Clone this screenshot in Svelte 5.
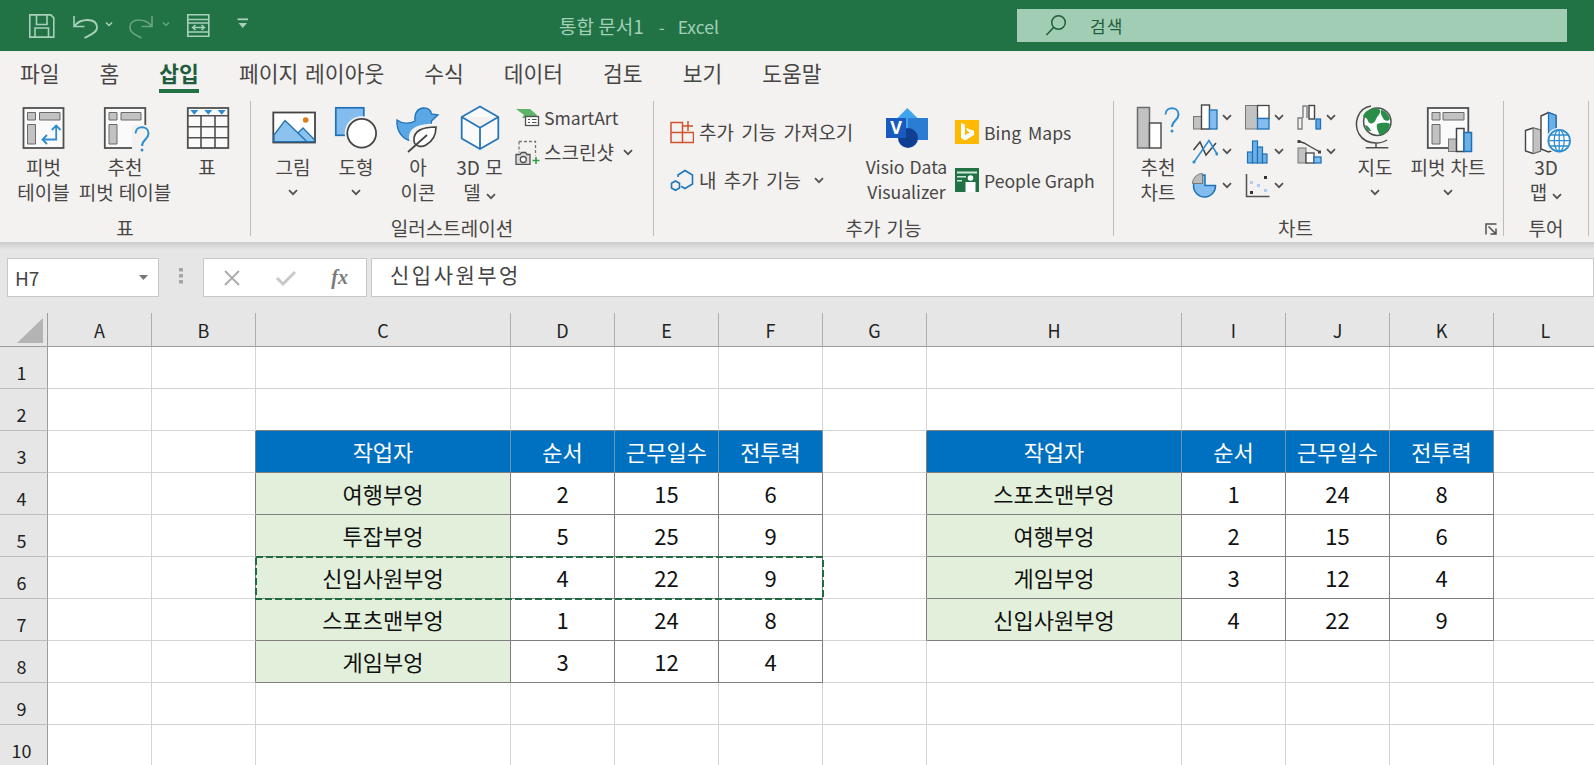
<script>
const tabs = ['파일', '홈', '삽입', '페이지 레이아웃', '수식', '데이터', '검토', '보기', '도움말']
const columns = ['A', 'B', 'C', 'D', 'E', 'F', 'G', 'H', 'I', 'J', 'K', 'L']
const rowNumbers = [1, 2, 3, 4, 5, 6, 7, 8, 9, 10]

const head = ['작업자', '순서', '근무일수', '전투력']
const tables = [
    {
        row: 3, col: 2,
        rows: [
            ['여행부엉', 2, 15, 6],
            ['투잡부엉', 5, 25, 9],
            ['신입사원부엉', 4, 22, 9],
            ['스포츠맨부엉', 1, 24, 8],
            ['게임부엉', 3, 12, 4]
        ]
    },
    {
        row: 3, col: 7,
        rows: [
            ['스포츠맨부엉', 1, 24, 8],
            ['여행부엉', 2, 15, 6],
            ['게임부엉', 3, 12, 4],
            ['신입사원부엉', 4, 22, 9]
        ]
    }
]

function tableAt(r, c) {
    return tables.find(t => r >= t.row && r <= t.row + t.rows.length && c >= t.col && c < t.col + 4)
}

function cell(r, c) {
    let t = tableAt(r, c)
    let text = ''
    let kind = ''
    if (t) {
        let x = c - t.col
        if (r === t.row) {
            text = head[x]
            kind = 'head'
        } else {
            text = t.rows[r - t.row - 1][x]
            kind = x === 0 ? 'name' : 'num'
        }
    }
    return {
        text,
        kind,
        right: !!(t || tableAt(r, c + 1)),
        bottom: !!(t || tableAt(r + 1, c))
    }
}
</script>

{#snippet chev()}
<svg class="chev" width="10" height="7" viewBox="0 0 10 7"><path d="M1 1.2 5 5.2 9 1.2" fill="none" stroke="#505050" stroke-width="1.7"/></svg>
{/snippet}

<div class="app">
    <header class="title">
        <svg class="qat" width="225" height="30" viewBox="0 0 225 30" fill="none" stroke="#a8d0ba" stroke-width="1.6">
            <path d="M1.8 4.9h21l3 3v19.2h-24z"/>
            <path d="M8.5 5v9.500h10.500v-9.500M7 27v-9h13.500v9"/>
            <path d="M46 6v10.500h10.500"/>
            <path d="M46.500 16C52 8.500 68.500 7 69 17.500 69.300 22.500 62 25 56.500 28" stroke-width="1.800"/>
            <path d="M78 12.500l3 3 3-3" stroke-width="1.500"/>
            <g stroke="#69a584">
                <path d="M124 6v10.500h-10.500"/>
                <path d="M123.500 16C118 8.500 102 7 102 17.500 101.700 22.500 108 25 113.500 28"/>
                <path d="M135 12.500l3 3 3-3" stroke-width="1.500"/>
            </g>
            <path d="M159.800 4.800h21v21.500h-21zM159.800 9.500h21M159.800 13h21M159.800 22h21M165 17.500h11M167.500 15l-2.800 2.500 2.800 2.500M173.500 15l2.800 2.500-2.800 2.500"/>
            <path d="M209.500 9.300h10.500" stroke-width="1.800"/>
            <path d="M210.500 13h8.500l-4.250 5z" fill="#a8d0ba" stroke="none"/>
        </svg>
        <div class="doc">통합 문서1<span class="dash">-</span><span class="app-name">Excel</span></div>
        <div class="search">
            <svg width="24" height="24" viewBox="0 0 24 24" fill="none" stroke="#1e5c3a" stroke-width="1.500"><circle cx="14.500" cy="9.500" r="6.800"/><path d="M9.500 14.500 2.500 22"/></svg>
            <span>검색</span>
        </div>
    </header>

    <nav class="tabs">
        {#each tabs as tab}
            <span class="tab" class:active={tab === '삽입'}>{tab}</span>
        {/each}
    </nav>

    <section class="ribbon">
        <div class="group g-table">
            <div class="tools">
                <div class="big w67">
                    <svg width="50" height="50" viewBox="0 0 50 50">
                        <rect x="4.500" y="3" width="40" height="40" fill="#fafafa" stroke="#505050" stroke-width="1.800"/>
                        <path d="M8.500 7.500h8v7.500h-8zM20.500 7.500h20.500v7.500h-20.500zM8.500 19.500h8v19.500h-8z" fill="#c2c2c2" stroke="#6b6b6b"/>
                        <path d="M37.200 20.500v14h-13.500M32.800 25l4.400-4.500 4.400 4.500M28 30l-4.500 4.500 4.500 4.500" fill="none" stroke="#2e8dd0" stroke-width="1.800"/>
                    </svg>
                    <span>피벗</span><span>테이블</span>
                </div>
                <div class="big w96">
                    <svg width="50" height="50" viewBox="0 0 50 50">
                        <rect x="4.800" y="3" width="40.500" height="40" fill="#fafafa" stroke="#505050" stroke-width="1.800"/>
                        <path d="M9 7.500h8v7.500h-8zM21 7.500h20v7.500h-20zM9 19.500h8v19.500h-8z" fill="#c2c2c2" stroke="#6b6b6b"/>
                        <rect x="32" y="20" width="18" height="28" fill="#f3f2f1"/>
                        <path d="M35.500 28.500c0-8.500 13-8.500 13 0 0 6-6.500 6-6.500 12.500" fill="none" stroke="#2e8dd0" stroke-width="2"/>
                        <circle cx="42" cy="45" r="1.500" fill="#2e8dd0"/>
                    </svg>
                    <span>추천</span><span>피벗 테이블</span>
                </div>
                <div class="big w68">
                    <svg width="50" height="50" viewBox="0 0 50 50">
                        <rect x="5.800" y="3" width="40.500" height="40" fill="#fafafa" stroke="#505050" stroke-width="1.800"/>
                        <path d="M5.800 10.700h40.500M19 10.700v32.300M33 10.700v32.300M5.800 21.700h40.500M5.800 32.700h40.500" stroke="#505050" stroke-width="1.600"/>
                        <path d="M8.300 5h8l-4 4.700zM22.300 5h8l-4 4.700zM35.700 5h8l-4 4.700z" fill="#2e8dd0"/>
                    </svg>
                    <span>표</span>
                </div>
            </div>
            <div class="label">표</div>
        </div>

        <div class="group g-illus">
            <div class="tools">
                <div class="big w62">
                    <svg width="50" height="50" viewBox="0 0 50 50">
                        <rect x="5.300" y="7.500" width="41.700" height="30" fill="#fff" stroke="#444" stroke-width="1.800"/>
                        <path d="M6 30 17 15.500 30 28 35 23 46.300 34.500V36.700H6z" fill="#8cc3ee" stroke="#2273b5" stroke-width="1.300"/>
                        <path d="M30 28l9 8.700" stroke="#2273b5" stroke-width="1.300"/>
                        <circle cx="37.700" cy="15" r="2.800" fill="#e07b1a"/>
                    </svg>
                    <span>그림</span>{@render chev()}
                </div>
                <div class="big w64">
                    <svg width="50" height="50" viewBox="0 0 50 50">
                        <rect x="4.800" y="2.800" width="28" height="27.500" fill="#83bdee" stroke="#1f72b8" stroke-width="1.700"/>
                        <circle cx="30.700" cy="28.300" r="17" fill="#f3f2f1"/>
                        <circle cx="30.700" cy="28.300" r="14.400" fill="#fff" stroke="#444" stroke-width="1.800"/>
                    </svg>
                    <span>도형</span>{@render chev()}
                </div>
                <div class="big w60">
                    <svg width="50" height="50" viewBox="0 0 50 50">
                        <path d="M4 15c5 4 13 4 18 1-1-8 3-13 9-13 5 0 7 3 7.500 6l6.500 1-6.500 6c0 10-5 20-18 20C10 36 3 26 4 15z" fill="#5aa7e6" stroke="#1f72b8" stroke-width="1.300"/>
                        <path d="M44 19c-14-1-29 2-28 15 1 8 10 10 17 5 9-6 11-13 11-20z" fill="#f3f2f1"/>
                        <path d="M43 22c-12 0-23 3-22 14 .5 5 7 7 12 4 7-4 10-10 10-18z" fill="#fff" stroke="#444" stroke-width="1.700"/>
                        <path d="M15 47 34 30" fill="none" stroke="#444" stroke-width="1.700"/>
                    </svg>
                    <span>아</span><span>이콘</span>
                </div>
                <div class="big w63">
                    <svg width="50" height="50" viewBox="0 0 50 50">
                        <path d="M25 1.500 43.300 12v21.500L25 44 6.700 33.500V12zM6.700 12 25 22.700 43.300 12M25 22.700V44" fill="#fafafa" stroke="#2676b8" stroke-width="1.800"/>
                    </svg>
                    <span>3D 모</span><span>델 {@render chev()}</span>
                </div>
                <div class="stack s-illus">
                    <div class="small">
                        <svg width="26" height="20" viewBox="0 0 26 20">
                            <path d="M1 1h14l7 6-2 3H7l2-3z" fill="#5fb567"/>
                            <rect x="10.500" y="8.500" width="13" height="9" fill="#fff" stroke="#505050" stroke-width="1.300"/>
                            <path d="M13 11.500h2M17 11.500h4.500M13 14.500h2M17 14.500h4.500" stroke="#505050"/>
                        </svg>
                        <span class="latin">SmartArt</span>
                    </div>
                    <div class="small">
                        <svg width="26" height="26" viewBox="0 0 26 26">
                            <path d="M4 2.500h16.500v14" fill="none" stroke="#777" stroke-width="1.300" stroke-dasharray="3 2"/>
                            <path d="M4 2.500v11" fill="none" stroke="#777" stroke-width="1.300" stroke-dasharray="3 2"/>
                            <path d="M1 15.500h4l1.500-2h4l1.500 2h3v10h-14z" fill="#ddd" stroke="#505050" stroke-width="1.300"/>
                            <circle cx="8.300" cy="20.500" r="3" fill="#fff" stroke="#505050" stroke-width="1.300"/>
                            <path d="M21 18v7M17.500 21.500h7" stroke="#2f9e44" stroke-width="1.600"/>
                        </svg>
                        <span>스크린샷</span>{@render chev()}
                    </div>
                </div>
            </div>
            <div class="label">일러스트레이션</div>
        </div>

        <div class="group g-addin">
            <div class="tools">
                <div class="stack s-addin">
                    <div class="small">
                        <svg width="24" height="24" viewBox="0 0 24 24" fill="none" stroke="#d0512a" stroke-width="1.500">
                            <path d="M1 2.500h11.500v20H1zM1 12.500h22.500v10H12.500M18 1v10M13 6h10"/>
                        </svg>
                        <span class="wide">추가 기능 가져오기</span>
                    </div>
                    <div class="small">
                        <svg width="24" height="24" viewBox="0 0 24 24" fill="none" stroke="#2176b8" stroke-width="1.600">
                            <path d="M8 9V7l7-4.500 7.500 4.500v9l-7.500 4.500-4-2.300"/>
                            <path d="M5.500 13l4 2.300v4.700l-4 2.300-4-2.300v-4.700z"/>
                        </svg>
                        <span class="wide">내 추가 기능</span>{@render chev()}
                    </div>
                </div>
                <div class="big w81 latin">
                    <svg width="50" height="50" viewBox="0 0 50 50">
                        <path d="M25.300 3 40 17.500 25.300 32 11 17.500z" fill="#41a5ee"/>
                        <rect x="26" y="13" width="20" height="22" fill="#2b7cd3"/>
                        <circle cx="26" cy="33" r="10" fill="#103f91"/>
                        <rect x="4" y="13" width="20" height="20" fill="#185abd"/>
                        <text x="14" y="29" text-anchor="middle" class="visio">V</text>
                    </svg>
                    <span>Visio Data</span><span>Visualizer</span>
                </div>
                <div class="stack s-addin2 latin">
                    <div class="small">
                        <svg width="24" height="24" viewBox="0 0 24 24">
                            <rect width="24" height="24" fill="#ffb900"/>
                            <path d="M6 3l4 1.500v10.500l5-2.500-2.500-1.200L11 8l8 2.800V15l-9 5.500L6 18z" fill="#fff"/>
                        </svg>
                        <span class="wide">Bing Maps</span>
                    </div>
                    <div class="small">
                        <svg width="24" height="24" viewBox="0 0 24 24">
                            <rect width="24" height="24" fill="#217346"/>
                            <path d="M2 3.500h20v2H2zM2 8h9v1.500H2zM2 12h5v1.500H2z" fill="#cfe6d8"/>
                            <circle cx="15.500" cy="10" r="2.800" fill="#fff"/>
                            <path d="M10.500 14h10v10h-10z" fill="#fff"/>
                        </svg>
                        <span>People Graph</span>
                    </div>
                </div>
            </div>
            <div class="label">추가 기능</div>
        </div>

        <div class="group g-chart">
            <div class="tools">
                <div class="big w62">
                    <svg width="50" height="50" viewBox="0 0 50 50">
                        <rect x="4.500" y="2.500" width="12" height="40.500" fill="#c2c2c2" stroke="#6b6b6b" stroke-width="1.500"/>
                        <rect x="16.500" y="18" width="11.500" height="25" fill="#fff" stroke="#505050" stroke-width="1.500"/>
                        <path d="M32.500 9.500c0-8.500 13-8.500 13 0 0 6-6.500 6-6.500 12.500" fill="none" stroke="#2e8dd0" stroke-width="2"/>
                        <circle cx="39" cy="26" r="1.500" fill="#2e8dd0"/>
                    </svg>
                    <span>추천</span><span>차트</span>
                </div>
                <div class="minis">
                    <div class="mini">
                        <svg width="26" height="26" viewBox="0 0 26 26">
                            <rect x="1.500" y="12.500" width="8" height="12.500" fill="#c2c2c2" stroke="#777"/>
                            <rect x="9.500" y="1" width="8" height="24" fill="#fff" stroke="#444" stroke-width="1.400"/>
                            <rect x="17.500" y="6" width="7.500" height="19" fill="#83bdee" stroke="#1f72b8" stroke-width="1.300"/>
                        </svg>
                        {@render chev()}
                    </div>
                    <div class="mini">
                        <svg width="26" height="26" viewBox="0 0 26 26">
                            <rect x="1.500" y="1.500" width="12" height="23.500" fill="#c2c2c2" stroke="#777"/>
                            <rect x="13.500" y="1.500" width="11.500" height="13" fill="#fff" stroke="#444" stroke-width="1.300"/>
                            <rect x="13.500" y="14.500" width="11.500" height="10.500" fill="#83bdee" stroke="#1f72b8" stroke-width="1.300"/>
                        </svg>
                        {@render chev()}
                    </div>
                    <div class="mini">
                        <svg width="26" height="26" viewBox="0 0 26 26" fill="none">
                            <path d="M2 25V14h4v11zM7 14V2h4v12M7 2h4" stroke="#808080" stroke-width="1.400"/>
                            <rect x="13" y="1.500" width="5.500" height="13.500" fill="#fff" stroke="#444" stroke-width="1.400"/>
                            <rect x="20" y="15" width="4.500" height="10" fill="#5aa7e6" stroke="#1f72b8" stroke-width="1.300"/>
                        </svg>
                        {@render chev()}
                    </div>
                    <div class="mini">
                        <svg width="26" height="26" viewBox="0 0 26 26" fill="none">
                            <path d="M1.500 12 8 4l6 13 10-12" stroke="#444" stroke-width="1.500"/>
                            <path d="M2 24 17 2.500 25 16" stroke="#2e8dd0" stroke-width="1.500"/>
                            <circle cx="2" cy="24" r="1.600" fill="#2e8dd0"/>
                            <circle cx="25" cy="16" r="1.600" fill="#2e8dd0"/>
                        </svg>
                        {@render chev()}
                    </div>
                    <div class="mini">
                        <svg width="26" height="26" viewBox="0 0 26 26" fill="#6cb0e8" stroke="#1f72b8" stroke-width="1.200">
                            <rect x="3.500" y="14" width="5" height="11"/>
                            <rect x="8.500" y="3" width="5" height="22"/>
                            <rect x="13.500" y="9" width="5" height="16"/>
                            <rect x="18.500" y="16" width="4.500" height="9"/>
                        </svg>
                        {@render chev()}
                    </div>
                    <div class="mini">
                        <svg width="26" height="26" viewBox="0 0 26 26">
                            <path d="M2 3l6 2 7 4 9 5" fill="none" stroke="#444" stroke-width="1.400"/>
                            <path d="M1.500 2h3v3h-3zM22 12.500h3v3h-3z" fill="#444"/>
                            <rect x="2" y="10" width="8" height="15" fill="#c2c2c2" stroke="#777"/>
                            <rect x="10" y="15" width="8" height="10" fill="#fff" stroke="#444" stroke-width="1.300"/>
                            <rect x="18" y="19" width="7" height="6" fill="#83bdee" stroke="#1f72b8" stroke-width="1.300"/>
                        </svg>
                        {@render chev()}
                    </div>
                    <div class="mini">
                        <svg width="26" height="26" viewBox="0 0 26 26">
                            <path d="M13 3v10.500h10.500A11 11 0 1 1 13 3z" fill="#83bdee" stroke="#1f72b8" stroke-width="1.500"/>
                            <path d="M10.500 1.500v10h-10a10 10 0 0 1 10-10z" fill="#bdbdbd" stroke="#777"/>
                        </svg>
                        {@render chev()}
                    </div>
                    <div class="mini">
                        <svg width="26" height="26" viewBox="0 0 26 26">
                            <path d="M2.500 2v22.500h23" fill="none" stroke="#505050" stroke-width="1.500"/>
                            <path d="M20 4h3v3h-3zM6 19h3v3H6z" fill="#333"/>
                            <path d="M6 9h3v3H6zM13 12h3v3h-3zM20 17h3v3h-3z" fill="#a9cdea"/>
                        </svg>
                        {@render chev()}
                    </div>
                </div>
                <div class="big w54">
                    <svg width="50" height="50" viewBox="0 0 50 50">
                        <path d="M21 1C8 3 3 18 9 29c3 5 9 9 17 9 4 0 8-1 11-3" fill="none" stroke="#505050" stroke-width="1.500"/>
                        <circle cx="27.300" cy="16.700" r="13.700" fill="#fff" stroke="#505050" stroke-width="1.500"/>
                        <path d="M17 6c4-3 11-4 13-1 1 4-3 6-4 9-1 5-7 6-8 2-1-3-3-4-5-4 0-2 2-5 4-6zM31 5c4 0 8 5 9 9-2 3-6 2-7-1-1-2-3-5-2-8zM27 19c4-1 10-2 13 0-1 6-5 11-10 11-2-3-4-8-3-11zM15 20c2 0 5 3 6 6-2 1-5-1-6-6z" fill="#2a8d4a"/>
                        <path d="M26 38v4.700M15.700 42.700h22.600" stroke="#505050" stroke-width="1.500"/>
                    </svg>
                    <span>지도</span>{@render chev()}
                </div>
                <div class="big w92">
                    <svg width="50" height="50" viewBox="0 0 50 50">
                        <rect x="4.800" y="3" width="40.500" height="40" fill="#fafafa" stroke="#505050" stroke-width="1.800"/>
                        <path d="M9 7.500h8v7.500h-8zM20 7.500h21v7.500h-21zM9 19.500h8v19.500h-8z" fill="#c2c2c2" stroke="#6b6b6b"/>
                        <rect x="25.500" y="34" width="8" height="12.500" fill="#bdbdbd" stroke="#777"/>
                        <rect x="33.500" y="23.500" width="7.500" height="23" fill="#fff" stroke="#444" stroke-width="1.500"/>
                        <rect x="41" y="27.500" width="7.500" height="19" fill="#6cb0e8" stroke="#1f72b8" stroke-width="1.500"/>
                    </svg>
                    <span>피벗 차트</span>{@render chev()}
                </div>
            </div>
            <div class="label l-chart">차트</div>
            <svg class="launcher" width="13" height="13" viewBox="0 0 13 13" fill="none" stroke="#505050" stroke-width="1.500"><path d="M1 11.500V1h10.500"/><path d="M3.500 3.500l7 7M5.500 11h5.500V5.500"/></svg>
        </div>

        <div class="group g-tour">
            <div class="tools">
                <div class="big w84">
                    <svg width="50" height="50" viewBox="0 0 50 50">
                        <path d="M4.500 25.500 12 23l7.500 2v21L12 48.500 4.500 46z" fill="#fff" stroke="#444" stroke-width="1.400"/>
                        <path d="M12 23l7.500 2v21L12 48.500z" fill="#c2c2c2" stroke="#777"/>
                        <path d="M20 11l7.500-3.500 7.500 3V44l-7.500 3-7.500-3z" fill="#fff" stroke="#444" stroke-width="1.400"/>
                        <path d="M27.500 7.500l7.500 3V38H27.500z" fill="#6cb0e8" stroke="#1f72b8" stroke-width="1.300"/>
                        <circle cx="38.200" cy="35.700" r="13" fill="#f3f2f1"/>
                        <circle cx="38.200" cy="35.700" r="10.800" fill="#fff" stroke="#2e8dd0" stroke-width="1.800"/>
                        <path d="M27.500 35.700h21.500M29 30h18.500M29 41h18.500M38.200 25v21.500" stroke="#2e8dd0" stroke-width="1.300"/>
                        <ellipse cx="38.200" cy="35.700" rx="5" ry="10.800" fill="none" stroke="#2e8dd0" stroke-width="1.300"/>
                    </svg>
                    <span>3D</span><span>맵 {@render chev()}</span>
                </div>
            </div>
            <div class="label">투어</div>
        </div>
    </section>

    <div class="fbar">
        <div class="namebox">
            <span>H7</span>
            <svg width="9" height="5" viewBox="0 0 9 5"><path d="M0 0h9L4.500 5z" fill="#777"/></svg>
        </div>
        <svg class="grip" width="4" height="16" viewBox="0 0 4 16" fill="#a6a6a6"><path d="M0 0h4v3.500H0zM0 6h4v3.500H0zM0 12h4v3.500H0z"/></svg>
        <div class="fxbox">
            <svg width="18" height="18" viewBox="0 0 18 18"><path d="M2 2l14 14M16 2 2 16" stroke="#adadad" stroke-width="2" fill="none"/></svg>
            <svg width="20" height="18" viewBox="0 0 20 18"><path d="M1 9l6 6L19 3" stroke="#c8c8c8" stroke-width="3" fill="none"/></svg>
            <span class="fx">fx</span>
        </div>
        <div class="formula">신입사원부엉</div>
    </div>

    <div class="sheet">
        <div class="corner"><svg width="28" height="27" viewBox="0 0 28 27"><path d="M27 1v25H1z" fill="#b4b4b4"/></svg></div>
        {#each columns as name}
            <div class="colhead">{name}</div>
        {/each}
        {#each rowNumbers as r}
            <div class="rowhead">{r}</div>
            {#each columns as _, c}
                {@const item = cell(r, c)}
                <div class="cell {item.kind}" class:right={item.right} class:bottom={item.bottom}>{item.text}</div>
            {/each}
        {/each}
        <svg class="ants" width="570" height="45" viewBox="0 0 570 45"><rect x="1" y="1" width="567" height="42" fill="none" stroke="#1f6b42" stroke-width="2" stroke-dasharray="7 3"/></svg>
    </div>
</div>

<style>
:global(body) {
    margin: 0;
    background: #fff;
}

.app {
    width: 1594px;
    height: 765px;
    overflow: hidden;
    font-family: "Noto Sans CJK KR", "Noto Sans", sans-serif;
    color: #484644;
}

.title {
    display: grid;
    grid-template-columns: 559px 458px 550px;
    align-items: center;
    height: 51px;
    background: #217346;
}

.qat {
    display: block;
    margin-left: 28px;
    margin-top: -1px;
}

.doc {
    font-size: 19px;
    color: #a3cfb7;
    margin-top: -1px;
    white-space: nowrap;
}

.dash {
    margin: 0 13px 0 15px;
    font-size: 17px;
}

.app-name {
    font-size: 17.500px;
}

.search {
    display: flex;
    align-items: center;
    height: 33px;
    margin-top: -1px;
    padding-left: 27px;
    background: #a1cdb4;
    color: #1e5c3a;
    font-size: 17px;
}

.search span {
    margin-left: 22px;
    letter-spacing: 1px;
}

.tabs {
    display: flex;
    gap: 40px;
    align-items: center;
    box-sizing: border-box;
    height: 50px;
    padding: 0 0 8px 20px;
    background: #f3f2f1;
    font-size: 21.500px;
}

.tab {
    position: relative;
    word-spacing: 2px;
}

.active {
    font-weight: 700;
    color: #1f5d3c;
}

.active::after {
    content: '';
    position: absolute;
    left: 0;
    right: 0;
    bottom: -5px;
    height: 4px;
    background: #217346;
}

.ribbon {
    display: flex;
    height: 141px;
    background: #f3f2f1;
    font-size: 19px;
    line-height: 24.500px;
}

.group {
    position: relative;
    display: flex;
    flex-direction: column;
    height: 135px;
    box-sizing: border-box;
    border-right: 1px solid #bdbdbd;
}

.g-table { width: 251px; padding-left: 10px; }
.g-illus { width: 403px; padding-left: 11px; }
.g-addin { width: 460px; padding-left: 16px; }
.g-chart { width: 390px; padding-left: 13px; }
.g-tour { width: 85px; }

.tools {
    display: flex;
    flex: 1;
}

.label {
    height: 22px;
    line-height: 22px;
    margin-left: -10px;
    margin-bottom: -3px;
    text-align: center;
    word-spacing: 2px;
}

.g-illus .label { margin-left: -11px; }
.g-addin .label { margin-left: -16px; }
.g-chart .label { margin-left: -13px; padding-right: 26px; }
.g-tour .label { margin-left: 0; }

.launcher {
    position: absolute;
    right: 5px;
    bottom: 0;
}

.big {
    display: flex;
    flex-direction: column;
    align-items: center;
    padding-top: 4px;
    white-space: nowrap;
    word-spacing: 1px;
}

.big > svg:first-child {
    display: block;
}

.big > .chev {
    margin-top: 9px;
}

.w54 { width: 54px; }
.w60 { width: 60px; }
.w62 { width: 62px; }
.w63 { width: 63px; }
.w64 { width: 64px; }
.w67 { width: 67px; }
.w68 { width: 68px; }
.w81 { width: 81px; }
.w84 { width: 84px; }
.w92 { width: 92px; }
.w96 { width: 96px; }

.stack {
    display: flex;
    flex-direction: column;
}

.s-illus {
    margin-left: 4px;
    width: 125px;
}

.s-illus .small {
    height: 34px;
    gap: 3px;
}

.s-illus .chev {
    margin-left: 6px;
}

.s-addin {
    width: 196px;
    padding-top: 7px;
}

.s-addin .small {
    height: 48px;
    gap: 5px;
}

.s-addin .chev {
    margin-left: 8px;
}

.s-addin2 {
    margin-left: 8px;
    padding-top: 6.500px;
}

.s-addin2 .small {
    height: 48px;
    gap: 5px;
}

.s-addin2 span {
    padding-top: 4px;
}

.small {
    display: flex;
    align-items: center;
    white-space: nowrap;
}

.latin {
    font-size: 17.600px;
}

.wide {
    word-spacing: 3px;
}

.minis {
    display: grid;
    grid-template-columns: repeat(3, 52px);
    grid-auto-rows: 34px;
    margin-left: 3px;
    margin-top: -1px;
    align-content: start;
}

.mini {
    display: flex;
    align-items: center;
    gap: 4px;
}

.fbar {
    display: flex;
    align-items: center;
    box-sizing: border-box;
    height: 71px;
    padding-left: 7px;
    background: linear-gradient(#cdcdcd, #e6e6e6 8px);
}

.namebox,
.fxbox,
.formula {
    box-sizing: border-box;
    height: 39px;
    background: #fff;
    border: 1px solid #c8c8c8;
}

.namebox {
    display: flex;
    align-items: center;
    justify-content: space-between;
    width: 152px;
    padding: 0 10px 0 7px;
    font-size: 19px;
    color: #444;
}

.grip {
    margin: -3px 20px 0 20px;
}

.fxbox {
    display: flex;
    align-items: center;
    justify-content: space-between;
    width: 164px;
    padding: 0 18px 0 19px;
}

.fx {
    font-family: "Liberation Serif", serif;
    font-style: italic;
    font-weight: 700;
    font-size: 20px;
    color: #7a7a7a;
}

.formula {
    flex: 1;
    margin-left: 4px;
    padding-left: 18px;
    font-size: 21px;
    line-height: 30px;
    letter-spacing: 2.500px;
    color: #444;
}

.sheet {
    position: relative;
    display: grid;
    grid-template-columns: 48px 104px 104px 255px 104px 104px 104px 104px 255px 104px 104px 104px 104px;
    grid-template-rows: 34px repeat(10, 42px);
    color: #111;
    font-size: 22px;
}

.corner,
.colhead,
.rowhead,
.cell {
    box-sizing: border-box;
    border-right: 1px solid #d4d4d4;
    border-bottom: 1px solid #d4d4d4;
}

.corner {
    display: flex;
    justify-content: flex-end;
    align-items: flex-end;
    padding: 0 3px 2px 0;
    background: #e6e6e6;
    border-right-color: #9c9c9c;
    border-bottom-color: #9c9c9c;
}

.corner svg {
    display: block;
}

.colhead {
    display: flex;
    align-items: center;
    justify-content: center;
    background: #e6e6e6;
    border-right-color: #adadad;
    border-bottom-color: #9c9c9c;
    font-size: 18px;
    color: #222;
}

.rowhead {
    display: flex;
    align-items: center;
    justify-content: center;
    padding-top: 8px;
    padding-right: 4px;
    background: #e6e6e6;
    border-right-color: #9c9c9c;
    border-bottom-color: #bdbdbd;
    font-size: 18px;
    color: #222;
}

.cell {
    display: flex;
    align-items: center;
    justify-content: center;
    min-width: 0;
    padding-bottom: 2px;
}

.right { border-right-color: #7f7f7f; }
.bottom { border-bottom-color: #7f7f7f; }

.head {
    background: #0070c0;
    color: #fff;
    border-right-color: #6f94b3;
    border-bottom-color: #7f7f7f;
}

.name {
    background: #e2efda;
}

.ants {
    position: absolute;
    grid-row: 7;
    grid-column: 4 / span 4;
    top: -1px;
    left: -1px;
    pointer-events: none;
}

.visio {
    font-family: "Noto Sans", sans-serif;
    font-weight: 700;
    font-size: 18px;
    fill: #fff;
}
</style>
